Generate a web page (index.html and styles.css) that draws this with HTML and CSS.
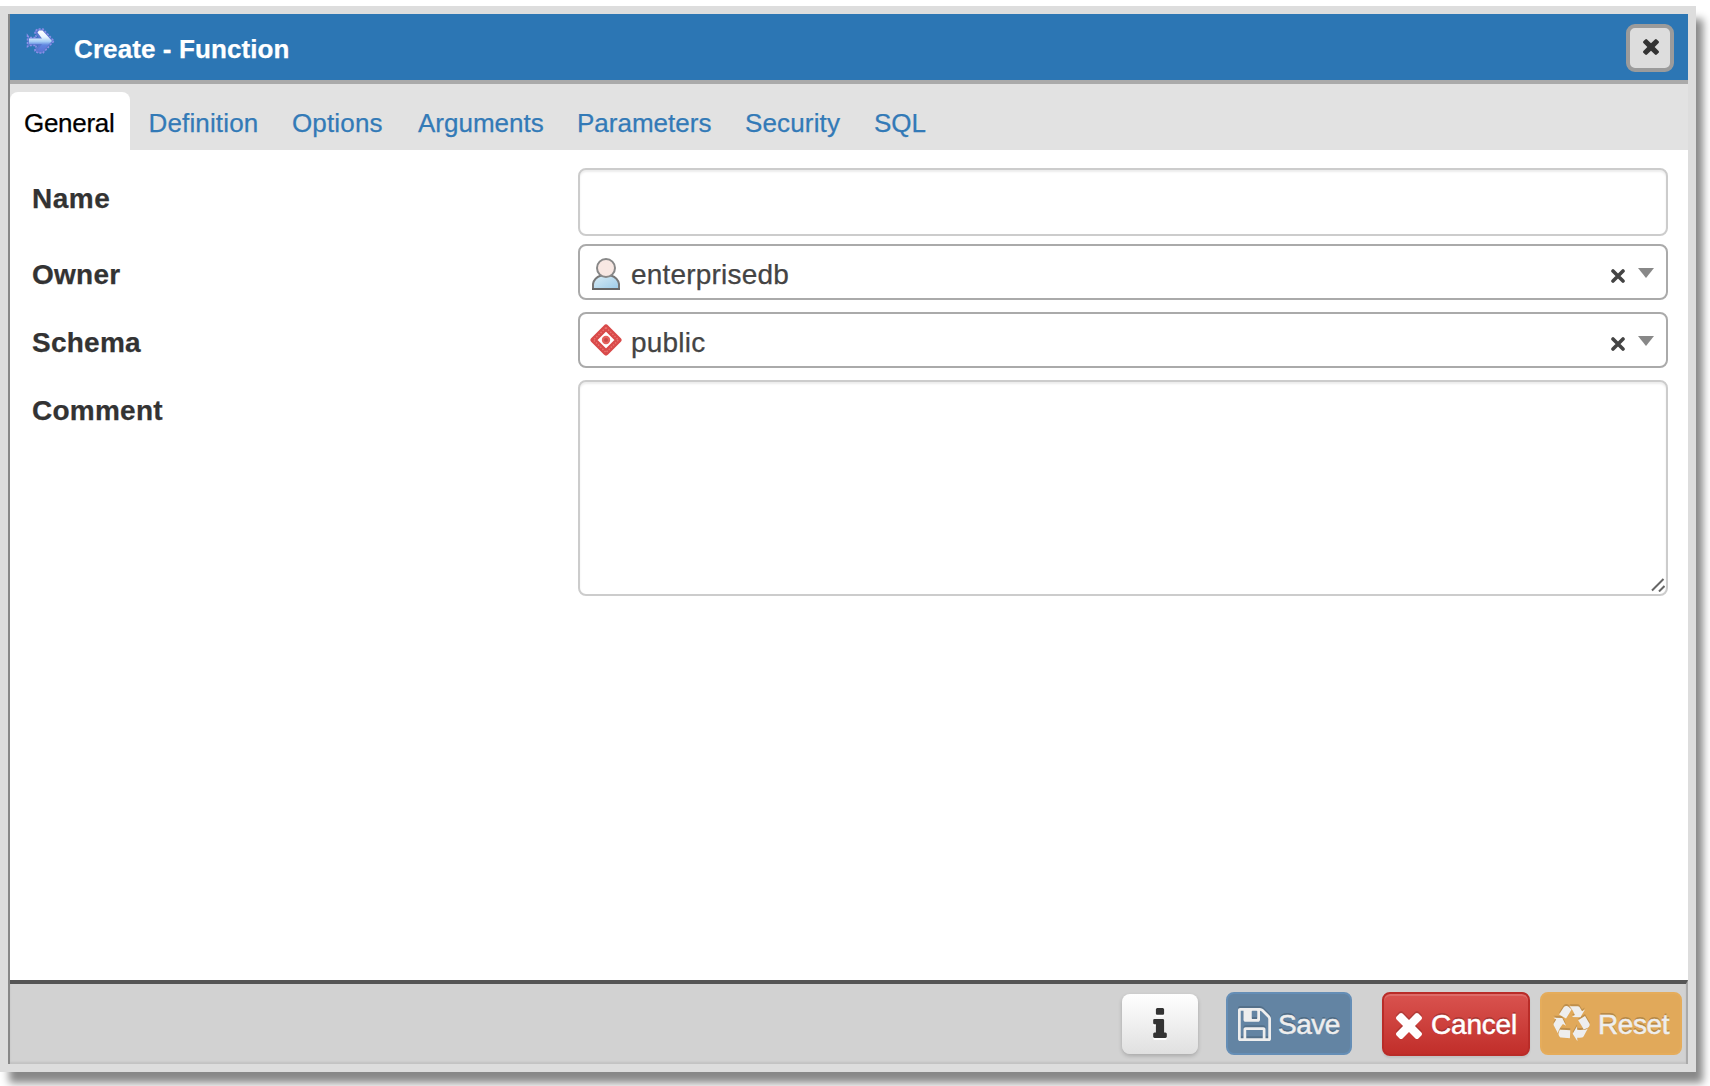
FILE: index.html
```html
<!DOCTYPE html>
<html lang="en">
<head>
<meta charset="utf-8">
<title>Create - Function</title>
<link rel="stylesheet" href="styles.css">
</head>
<body>
<svg class="defs" aria-hidden="true">
  <symbol id="times" viewBox="302 366 1188 1188"><path d="M1490 1322q0 40-28 68l-136 136q-28 28-68 28t-68-28l-294-294-294 294q-28 28-68 28t-68-28l-136-136q-28-28-28-68t28-68l294-294-294-294q-28-28-28-68t28-68l136-136q28-28 68-28t68 28l294 294 294-294q28-28 68-28t68 28l136 136q28 28 28 68t-28 68l-294 294 294 294q28 28 28 68z"/></symbol>
  <symbol id="clear" viewBox="0 0 14 14"><path d="M2 2L12 12M12 2L2 12" fill="none" stroke="#444" stroke-width="3.6" stroke-linecap="round"/></symbol>
</svg>
<div class="dialog">
  <header class="header">
    <svg class="fn-icon" viewBox="0 0 30 28">
      <defs><linearGradient id="arrow" gradientUnits="userSpaceOnUse" x1="0" y1="3" x2="0" y2="26"><stop offset="0" stop-color="#fff"/><stop offset=".3" stop-color="#e6f5ff"/><stop offset=".5" stop-color="#a5cdf5"/><stop offset=".65" stop-color="#5f86e0"/><stop offset="1" stop-color="#5a70d4"/></linearGradient></defs>
      <path d="M1.500 8.500L3 10.500H12.500L9 6V4L12 2H17L28 14L17 26H12L9 24V22L12.500 18.500H3L1.500 19.500Z" fill="#5a78d0"/>
      <path d="M1.500 8.500L3 10.500H10.500L9 6V4L12 2H17L28 14L17 26H12L9 24V22L10.500 18.500H3L1.500 19.500Z" fill="none" stroke="#8c8fe6" stroke-width="1.500" stroke-dasharray="2 1.500"/>
      <path d="M3 11.500H16L11.500 5.500L13 3.500H16.500L26 14L16.500 24H13L12 22.500L16 17H3Z" fill="url(#arrow)"/>
    </svg>
    <h1 class="title">Create - Function</h1>
    <button class="close" aria-label="Close"><svg><use href="#times"/></svg></button>
  </header>
  <nav class="tabs">
    <a class="tab active">General</a>
    <a class="tab wide">Definition</a>
    <a class="tab wide">Options</a>
    <a class="tab">Arguments</a>
    <a class="tab">Parameters</a>
    <a class="tab wide">Security</a>
    <a class="tab">SQL</a>
  </nav>
  <main class="form">
    <label class="label name">Name</label>
    <div class="input"></div>
    <label class="label">Owner</label>
    <div class="select">
      <svg class="item-icon user" viewBox="0 0 32 32">
        <defs><linearGradient id="shirt" x1="0" y1="0" x2="1" y2="1"><stop offset="0" stop-color="#d9edf6"/><stop offset="1" stop-color="#9dcbe8"/></linearGradient></defs>
        <path d="M3 31V26Q4 20 11 17.500H21Q28 20 29 26V31Z" fill="url(#shirt)" stroke="#777" stroke-width="2"/>
        <path d="M2 31H30" stroke="#666" stroke-width="2"/>
        <circle cx="16" cy="10" r="9" fill="#f8e8e3" stroke="#888" stroke-width="2"/>
      </svg>
      <span class="value">enterprisedb</span>
      <svg class="clear"><use href="#clear"/></svg>
      <i class="caret"></i>
    </div>
    <label class="label">Schema</label>
    <div class="select">
      <svg class="item-icon" viewBox="0 0 32 32">
        <path d="M16 3.500L28.500 16L16 28.500L3.500 16Z" fill="#fff" stroke="#d94a4a" stroke-width="6" stroke-linejoin="round"/>
        <path d="M16 3.500L28.500 16L16 28.500L3.500 16Z" fill="none" stroke="#e9716d" stroke-width="1.500" stroke-dasharray="1.500 1.500"/>
        <circle cx="16" cy="16" r="4.200" fill="#e4615c"/>
        <circle cx="16" cy="16" r="2" fill="#c94848"/>
      </svg>
      <span class="value">public</span>
      <svg class="clear"><use href="#clear"/></svg>
      <i class="caret"></i>
    </div>
    <label class="label">Comment</label>
    <div class="input comment"><svg class="grip" viewBox="0 0 14 14"><path d="M1 12.500L12.500 1M8 13.500L13.500 8" stroke="#666" stroke-width="2"/></svg></div>
  </main>
  <footer class="footer">
    <button class="btn info" aria-label="Info"><svg viewBox="576 128 640 1408"><path d="M1216 1344v128q0 26-19 45t-45 19h-512q-26 0-45-19t-19-45v-128q0-26 19-45t45-19h64v-384h-64q-26 0-45-19t-19-45v-128q0-26 19-45t45-19h384q26 0 45 19t19 45v576h64q26 0 45 19t19 45zm-128-1152v192q0 26-19 45t-45 19h-256q-26 0-45-19t-19-45v-192q0-26 19-45t45-19h256q26 0 45 19t19 45z"/></svg></button>
    <button class="btn save"><svg viewBox="128 128 1536 1536"><path d="M512 1536h768v-384h-768v384zm896 0h128v-896q0-14-10-38.500t-20-34.500l-281-281q-10-10-34-20t-39-10v416q0 40-28 68t-68 28h-576q-40 0-68-28t-28-68v-416h-128v1280h128v-416q0-40 28-68t68-28h832q40 0 68 28t28 68v416zm-384-928v-320q0-13-9.500-22.500t-22.500-9.500h-192q-13 0-22.500 9.500t-9.500 22.500v320q0 13 9.500 22.500t22.500 9.500h192q13 0 22.500-9.500t9.500-22.500zm640 32v928q0 40-28 68t-68 28h-1344q-40 0-68-28t-28-68v-1344q0-40 28-68t68-28h928q40 0 88 20t76 48l280 280q28 28 48 76t20 88z"/></svg>Save</button>
    <button class="btn cancel"><svg><use href="#times"/></svg>Cancel</button>
    <button class="btn reset"><svg viewBox="0 0 1792 1792"><path d="M836 1169l-15 368-2 22-420-29q-36-3-67-31.500t-47-65.500q-11-27-14.500-55t4-65 12-55 21.500-64 19-53q78 12 509 28zm-387-586l180 379-147-92q-63 72-111.500 144.500t-72.500 125-39.500 94.500-18.500 63l-4 21-190-357q-17-26-18-56t6-47l8-18q35-63 114-188l-140-86zm1231 517l-188 359q-12 29-36.500 46.500t-43.500 20.500l-18 4q-71 7-219 12l8 164-230-367 211-362 7 173q170 16 283 5t170-33zm-785-924q-47 63-265 435l-317-187-19-12 225-356q20-31 60-45t80-10q24 2 48.500 12t42 21 41.500 33 36 34.500 36 39.500 32 35zm655 307l212 363q18 37 12.500 76t-27.500 74q-13 20-33 37t-38 28-48.500 22-47 16-51.500 14-46 12q-34-72-265-436l313-195zm-143-226l142-83-220 373-419-20 151-86q-34-89-75-166t-75.500-123.500-64.500-80-47-46.500l-17-13 405 1q31-3 58 10.500t39 28.500l11 15q39 61 112 190z"/></svg>Reset</button>
  </footer>
</div>
</body>
</html>
```
FILE: styles.css
```css
* { box-sizing: border-box; }
body {
  margin: 0;
  height: 1086px;
  padding-top: 6px;
  overflow: hidden;
  background: #fff;
  font-family: "Liberation Sans", Arial, sans-serif;
  -webkit-text-stroke: .25px currentColor;
}
.defs { position: absolute; width: 0; height: 0; }
.dialog {
  width: 1696px;
  height: 1066px;
  border: 8px solid #ddd;
  display: flex;
  flex-direction: column;
  background: linear-gradient(90deg, #888 2px, #fff 2px);
  padding-left: 2px;
  box-shadow: 8px 12px 8px -1px #888;
}
.header {
  height: 70px;
  flex: none;
  display: flex;
  align-items: flex-start;
  padding: 10px 14px 0 16px;
  background: #2c76b4;
  border-bottom: 4px solid #aaa;
}
.fn-icon { width: 30px; height: 28px; margin: 3px 18px 0 0; }
.title {
  flex: 1;
  margin: 0;
  padding-top: 5px;
  font-size: 26px;
  line-height: 40px;
  letter-spacing: .1px;
  color: #fff;
}
.close {
  width: 48px;
  height: 48px;
  padding: 10px 12px;
  border: 4px solid #9b9b9b;
  border-radius: 9px;
  background: #ddd;
}
.close svg { display: block; width: 16px; height: 16px; margin: -3px 0 0 1px; fill: #333; }
.tabs {
  height: 66px;
  flex: none;
  display: grid;
  grid-template-columns: 122px 143.5px 126px 159px 168px 129px 90px;
  padding-top: 8px;
  background: #e2e2e2;
}
.tab {
  padding-left: 16.5px;
  font-size: 26px;
  line-height: 62px;
  color: #337ab7;
}
.tab.wide { letter-spacing: .15px; }
.tab.active {
  margin-right: 2px;
  padding-left: 14px;
  border-radius: 8px 8px 0 0;
  background: #fff;
  color: #000;
  letter-spacing: -.3px;
}
.form {
  flex: 1;
  display: grid;
  grid-template-columns: 546px 1090px;
  grid-template-rows: 76px 68px 68px 216px;
  align-items: start;
  padding: 18px 0 0 22px;
}
.label {
  font-size: 28px;
  font-weight: bold;
  line-height: 62px;
  letter-spacing: .25px;
  color: #333;
}
.name { letter-spacing: .5px; }
.input {
  height: 68px;
  border: 2px solid #ccc;
  border-radius: 8px;
  box-shadow: inset 0 2px 2px rgba(0, 0, 0, .075);
}
.comment {
  height: 216px;
  display: flex;
  align-items: flex-end;
  justify-content: flex-end;
  padding: 2px 1px 2px 2px;
}
.grip { width: 14px; height: 14px; }
.select {
  height: 56px;
  display: flex;
  align-items: center;
  padding: 0 12px 0 10px;
  border: 2px solid #aaa;
  border-radius: 8px;
}
.item-icon { width: 32px; height: 32px; margin-right: 9px; }
.item-icon.user { margin-top: 3px; }
.value {
  flex: 1;
  font-size: 28px;
  line-height: 56px;
  padding-top: 5px;
  letter-spacing: .2px;
  color: #444;
}
.clear { width: 14px; height: 14px; margin: 7px 13px 0 0; }
.caret {
  border: 8px solid transparent;
  border-top: 10px solid #888;
  border-bottom: 0;
  margin-top: 2px;
}
.footer {
  height: 84px;
  flex: none;
  display: flex;
  align-items: flex-start;
  justify-content: flex-end;
  padding: 8px 4px 0 0;
  border-top: 4px solid #555;
  border-right: 2px solid #aaa;
  background: #d2d2d2;
  box-shadow: inset 0 -2px 2px rgba(0, 0, 0, .08);
}
.btn {
  height: 63px;
  display: flex;
  align-items: center;
  border: 2px solid;
  border-radius: 8px;
  font: 28px/60px "Liberation Sans", Arial, sans-serif;
  letter-spacing: -.2px;
  color: #fff;
  text-shadow: 0 -2px 0 rgba(0, 0, 0, .2);
  -webkit-text-stroke: .5px currentColor;
}
.btn svg { flex: none; fill: currentColor; -webkit-text-stroke: 0; filter: drop-shadow(0 -2px 0 rgba(0, 0, 0, .15)); }
.info {
  width: 76px;
  height: 60px;
  margin: 2px 28px 0 0;
  padding: 0;
  justify-content: center;
  border: 0;
  background: linear-gradient(#fff, #e0e0e0);
  color: #333;
  box-shadow: 0 2px 4px rgba(0, 0, 0, .2);
}
.info svg { width: 14px; height: 30px; margin-bottom: 2px; filter: drop-shadow(0 2px 0 #fff); }
.save {
  width: 126px;
  margin-right: 30px;
  padding: 2px 0 0 10px;
  border-color: #658eb6;
  background: #6384a3;
  color: #eee;
  letter-spacing: -.5px;
}
.save svg { width: 33px; height: 33px; margin: 0 7px 0 0; }
.cancel {
  width: 148px;
  height: 64px;
  margin-right: 10px;
  padding: 2px 0 0 12px;
  border-color: #b92c28;
  background: linear-gradient(#d9534f, #c12e2a);
  box-shadow: inset 0 2px 0 rgba(255, 255, 255, .15), 0 2px 2px rgba(0, 0, 0, .08);
}
.cancel svg { width: 26px; height: 26px; margin: 1px 9px 0 0; }
.reset {
  width: 142px;
  padding: 2px 0 0 11px;
  border-color: #e5ac5b;
  background: #e1a95a;
  color: #eee;
  letter-spacing: -.4px;
}
.reset svg { width: 37px; height: 37px; margin: 0 8px 1px 0; }
```
